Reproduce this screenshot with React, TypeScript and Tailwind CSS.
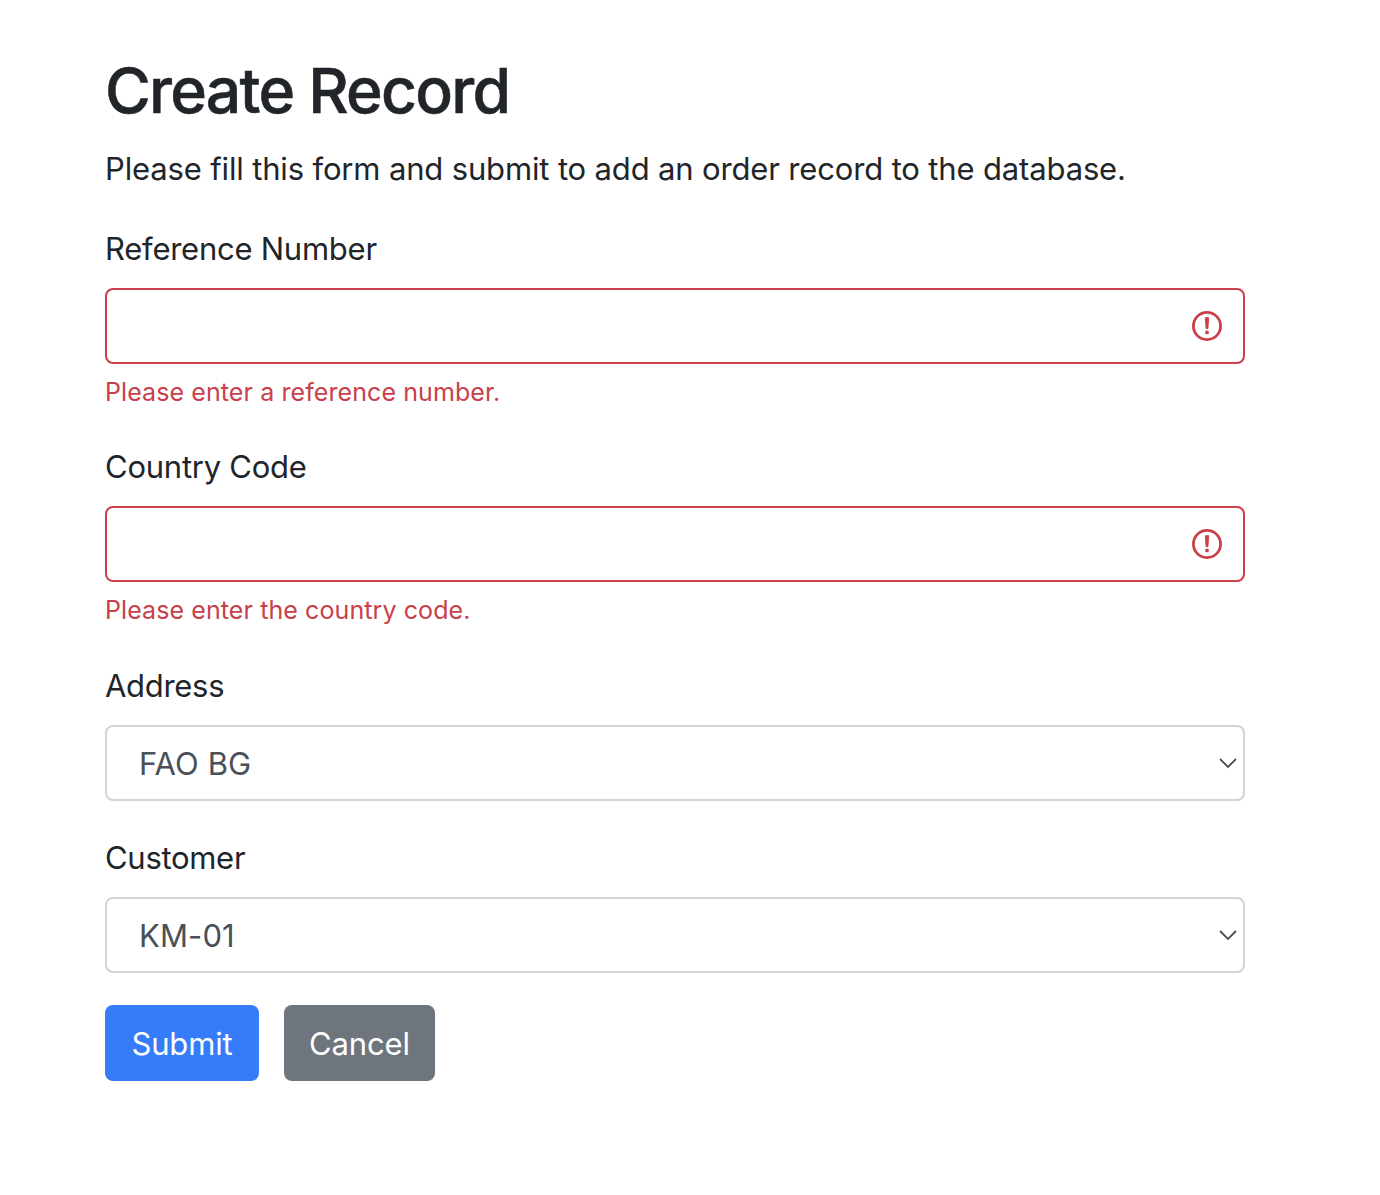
function InvalidIcon() {
  return (
    <svg className="h-8 w-8" viewBox="0 0 32 32" fill="none" aria-hidden="true">
      <circle cx="16" cy="16" r="13.6" stroke="#c9404a" strokeWidth="2.8" />
      <path d="M14.3 7.7h3.4l-0.8 11h-1.8z" fill="#c9404a" stroke="#c9404a" strokeWidth="0.9" strokeLinejoin="round" />
      <circle cx="16" cy="22.4" r="1.9" fill="#c9404a" />
    </svg>
  );
}

function InvalidField({ label, message, id }: { label: string; message: string; id: string }) {
  return (
    <div className="mb-8">
      <label htmlFor={id} className="mb-4 block h-[47px] text-[31px] leading-[48px] tracking-[-0.25px]">{label}</label>
      <div className="flex h-[76px] items-center rounded-lg border-2 border-[#c9404a] pr-5">
        <input id={id} className="h-full min-w-0 flex-1 bg-transparent px-6 text-[31px] outline-none" />
        <InvalidIcon />
      </div>
      <p className="mt-[9px] h-[38px] text-[25px] leading-[38px] tracking-[0.09px] text-[#c9404a]">{message}</p>
    </div>
  );
}

function SelectField({ label, value }: { label: string; value: string }) {
  return (
    <div>
      <div className="mb-4 h-[47px] text-[31px] leading-[48px] tracking-[-0.3px]">{label}</div>
      <div className="flex h-[76px] items-center justify-between rounded-lg border-2 border-[#ced4da] pr-[5px] pl-8 text-[31px] text-[#495057]">
        <span className="pt-[2px] tracking-[0.1px]">{value}</span>
        <svg className="h-5 w-5" viewBox="0 0 20 20" fill="none" aria-hidden="true">
          <path d="M2 6l8 8 8-8" stroke="#495057" strokeWidth="1.8" />
        </svg>
      </div>
    </div>
  );
}

export default function App() {
  return (
    <main className="h-[1195px] bg-white pt-[52px] pr-[135px] pl-[105px] font-['Inter',sans-serif] text-[#212529]">
      <h1 className="mb-4 h-[77px] text-[62.5px] leading-[77px] font-medium tracking-[-1.78px] [-webkit-text-stroke:0.5px_#212529]">Create Record</h1>
      <p className="mb-8 h-12 text-[31px] leading-[48px] tracking-[-0.15px]">Please fill this form and submit to add an order record to the database.</p>
      <InvalidField id="reference" label="Reference Number" message="Please enter a reference number." />
      <InvalidField id="country" label="Country Code" message="Please enter the country code." />
      <div className="mt-[33px] mb-8 flex flex-col gap-[33px]">
        <SelectField label="Address" value="FAO BG" />
        <SelectField label="Customer" value="KM-01" />
      </div>
      <div className="flex gap-[25px] text-[31px] tracking-[-0.15px] text-white">
        <button className="h-[76px] w-[154px] rounded-lg bg-[#367bf8] pt-[2px]">Submit</button>
        <button className="h-[76px] w-[151px] rounded-lg bg-[#6e757c] pt-[2px]">Cancel</button>
      </div>
    </main>
  );
}
